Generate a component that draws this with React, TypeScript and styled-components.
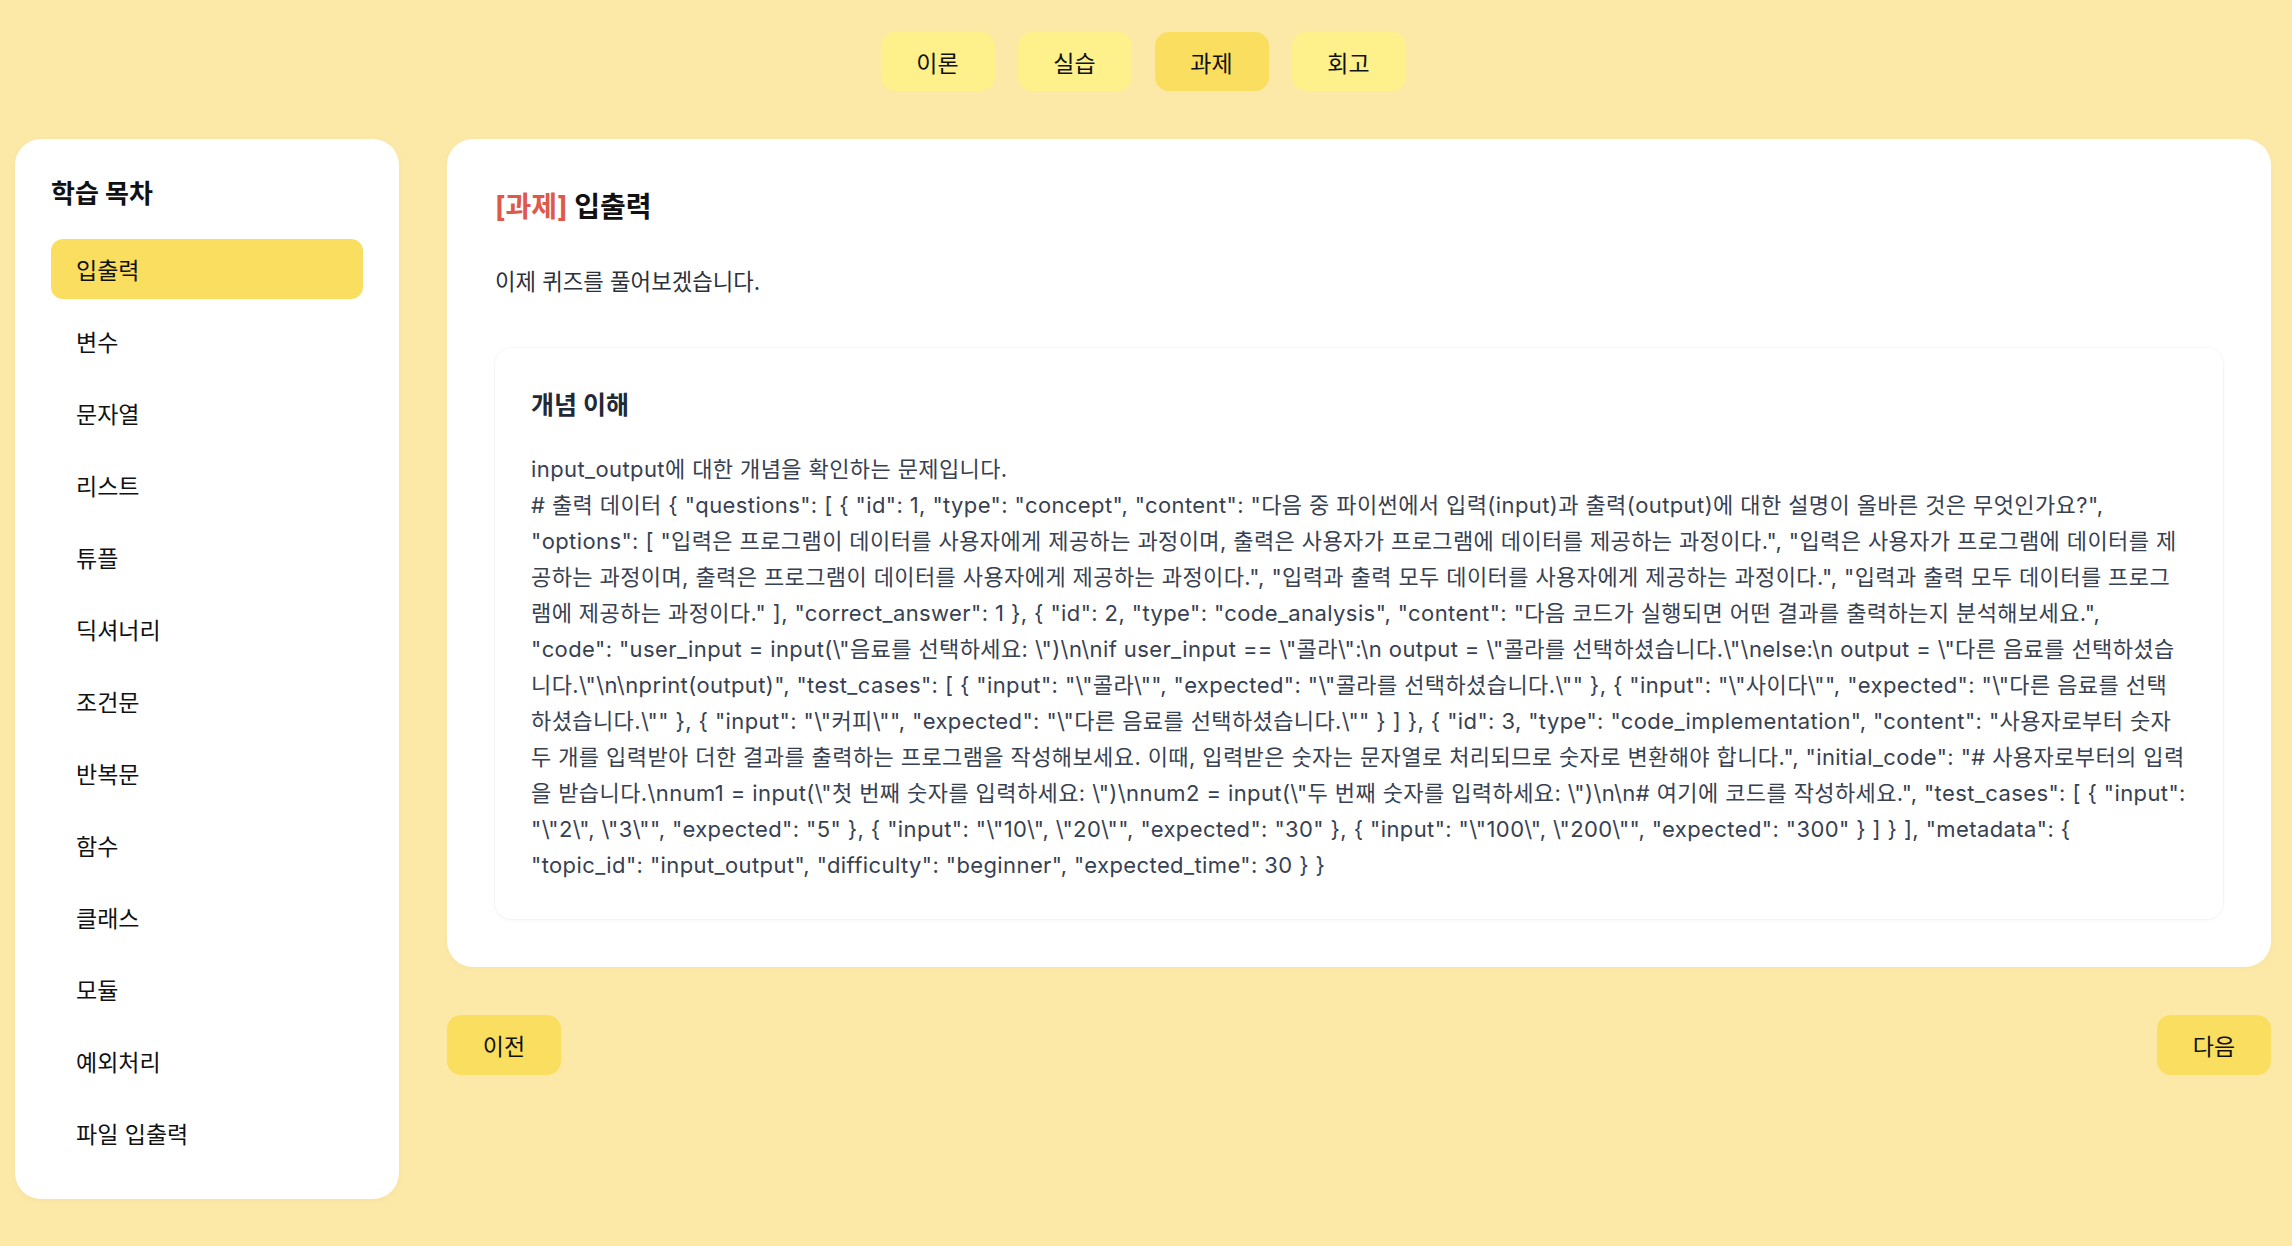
import React from "react";
import styled, { createGlobalStyle } from "styled-components";

const GlobalStyle = createGlobalStyle`
  html, body {
    margin: 0;
    padding: 0;
    background: #fde9a7;
  }
  body {
    font-family: "Inter", "Noto Sans CJK KR", sans-serif;
    color: #111111;
  }
  * { box-sizing: border-box; }
`;

const Page = styled.div`
  min-height: 100vh;
  padding: 32px 21px 48px 15px;
`;

const TabBar = styled.nav`
  display: flex;
  justify-content: center;
  gap: 23px;
  margin-bottom: 48px;
`;

const Tab = styled.button<{ $active?: boolean }>`
  width: 114px;
  height: 59px;
  padding: 0;
  border: none;
  border-radius: 14px;
  background: ${(p) => (p.$active ? "#f9de5f" : "#fef08a")};
  color: #111111;
  font-family: inherit;
  font-size: 23px;
  cursor: pointer;
`;

const Layout = styled.div`
  display: grid;
  grid-template-columns: 384px 1fr;
  gap: 48px;
  align-items: start;
`;

const Sidebar = styled.aside`
  background: #ffffff;
  border-radius: 26px;
  padding: 36px;
  box-shadow: 0 2px 6px rgba(0, 0, 0, 0.04);
`;

const SidebarTitle = styled.h2`
  margin: 0 0 26px;
  font-size: 26px;
  font-weight: 700;
  line-height: 38px;
  color: #111111;
`;

const NavList = styled.ul`
  list-style: none;
  margin: 0;
  padding: 0;
  display: flex;
  flex-direction: column;
  gap: 12px;
`;

const NavItem = styled.li<{ $active?: boolean }>`
  height: 60px;
  display: flex;
  align-items: center;
  padding-left: 25px;
  border-radius: 12px;
  font-size: 23px;
  color: #111111;
  background: ${(p) => (p.$active ? "#f9de5f" : "transparent")};
`;

const Main = styled.main`
  display: flex;
  flex-direction: column;
  gap: 48px;
`;

const Card = styled.section`
  background: #ffffff;
  border-radius: 26px;
  padding: 48px;
  box-shadow: 0 2px 6px rgba(0, 0, 0, 0.03);
`;

const Title = styled.h1`
  margin: 0;
  font-size: 28px;
  font-weight: 700;
  line-height: 41px;
  color: #111111;
`;

const Tag = styled.span`
  color: #e0584a;
`;

const Intro = styled.p`
  margin: 36px 0 0;
  font-size: 22.3px;
  line-height: 36px;
  color: #2b313b;
`;

const ContentBox = styled.div`
  margin-top: 48px;
  border-radius: 16px;
  padding: 36px;
  background: #ffffff;
  box-shadow: 0 0 0 1px rgba(0, 0, 0, 0.025), 0 1px 4px rgba(0, 0, 0, 0.04);
`;

const BoxHeading = styled.h3`
  margin: 0 0 25px;
  font-size: 25px;
  font-weight: 700;
  line-height: 42px;
  color: #1f2937;
`;

const BodyLine = styled.p`
  margin: 0;
  font-size: 22px;
  line-height: 36px;
  letter-spacing: 0.4px;
  color: #374151;
  overflow-wrap: anywhere;
`;

const Footer = styled.div`
  display: flex;
  justify-content: space-between;
`;

const NavButton = styled.button`
  width: 114px;
  height: 60px;
  padding: 0;
  border: none;
  border-radius: 14px;
  background: #f9de5f;
  color: #111111;
  font-family: inherit;
  font-size: 23px;
  cursor: pointer;
`;

const tabs = ["이론", "실습", "과제", "회고"];
const topics = [
  "입출력",
  "변수",
  "문자열",
  "리스트",
  "튜플",
  "딕셔너리",
  "조건문",
  "반복문",
  "함수",
  "클래스",
  "모듈",
  "예외처리",
  "파일 입출력",
];

const jsonText = String.raw`# 출력 데이터 { "questions": [ { "id": 1, "type": "concept", "content": "다음 중 파이썬에서 입력(input)과 출력(output)에 대한 설명이 올바른 것은 무엇인가요?", "options": [ "입력은 프로그램이 데이터를 사용자에게 제공하는 과정이며, 출력은 사용자가 프로그램에 데이터를 제공하는 과정이다.", "입력은 사용자가 프로그램에 데이터를 제공하는 과정이며, 출력은 프로그램이 데이터를 사용자에게 제공하는 과정이다.", "입력과 출력 모두 데이터를 사용자에게 제공하는 과정이다.", "입력과 출력 모두 데이터를 프로그램에 제공하는 과정이다." ], "correct_answer": 1 }, { "id": 2, "type": "code_analysis", "content": "다음 코드가 실행되면 어떤 결과를 출력하는지 분석해보세요.", "code": "user_input = input(\"음료를 선택하세요: \")\n\nif user_input == \"콜라\":\n output = \"콜라를 선택하셨습니다.\"\nelse:\n output = \"다른 음료를 선택하셨습니다.\"\n\nprint(output)", "test_cases": [ { "input": "\"콜라\"", "expected": "\"콜라를 선택하셨습니다.\"" }, { "input": "\"사이다\"", "expected": "\"다른 음료를 선택하셨습니다.\"" }, { "input": "\"커피\"", "expected": "\"다른 음료를 선택하셨습니다.\"" } ] }, { "id": 3, "type": "code_implementation", "content": "사용자로부터 숫자 두 개를 입력받아 더한 결과를 출력하는 프로그램을 작성해보세요. 이때, 입력받은 숫자는 문자열로 처리되므로 숫자로 변환해야 합니다.", "initial_code": "# 사용자로부터의 입력을 받습니다.\nnum1 = input(\"첫 번째 숫자를 입력하세요: \")\nnum2 = input(\"두 번째 숫자를 입력하세요: \")\n\n# 여기에 코드를 작성하세요.", "test_cases": [ { "input": "\"2\", \"3\"", "expected": "5" }, { "input": "\"10\", \"20\"", "expected": "30" }, { "input": "\"100\", \"200\"", "expected": "300" } ] } ], "metadata": { "topic_id": "input_output", "difficulty": "beginner", "expected_time": 30 } }`;

export default function App() {
  return (
    <>
      <GlobalStyle />
      <Page>
        <TabBar>
          {tabs.map((t) => (
            <Tab key={t} $active={t === "과제"}>
              {t}
            </Tab>
          ))}
        </TabBar>
        <Layout>
          <Sidebar>
            <SidebarTitle>학습 목차</SidebarTitle>
            <NavList>
              {topics.map((t) => (
                <NavItem key={t} $active={t === "입출력"}>
                  {t}
                </NavItem>
              ))}
            </NavList>
          </Sidebar>
          <Main>
            <Card>
              <Title>
                <Tag>[과제]</Tag> 입출력
              </Title>
              <Intro>이제 퀴즈를 풀어보겠습니다.</Intro>
              <ContentBox>
                <BoxHeading>개념 이해</BoxHeading>
                <BodyLine>input_output에 대한 개념을 확인하는 문제입니다.</BodyLine>
                <BodyLine>{jsonText}</BodyLine>
              </ContentBox>
            </Card>
            <Footer>
              <NavButton>이전</NavButton>
              <NavButton>다음</NavButton>
            </Footer>
          </Main>
        </Layout>
      </Page>
    </>
  );
}
